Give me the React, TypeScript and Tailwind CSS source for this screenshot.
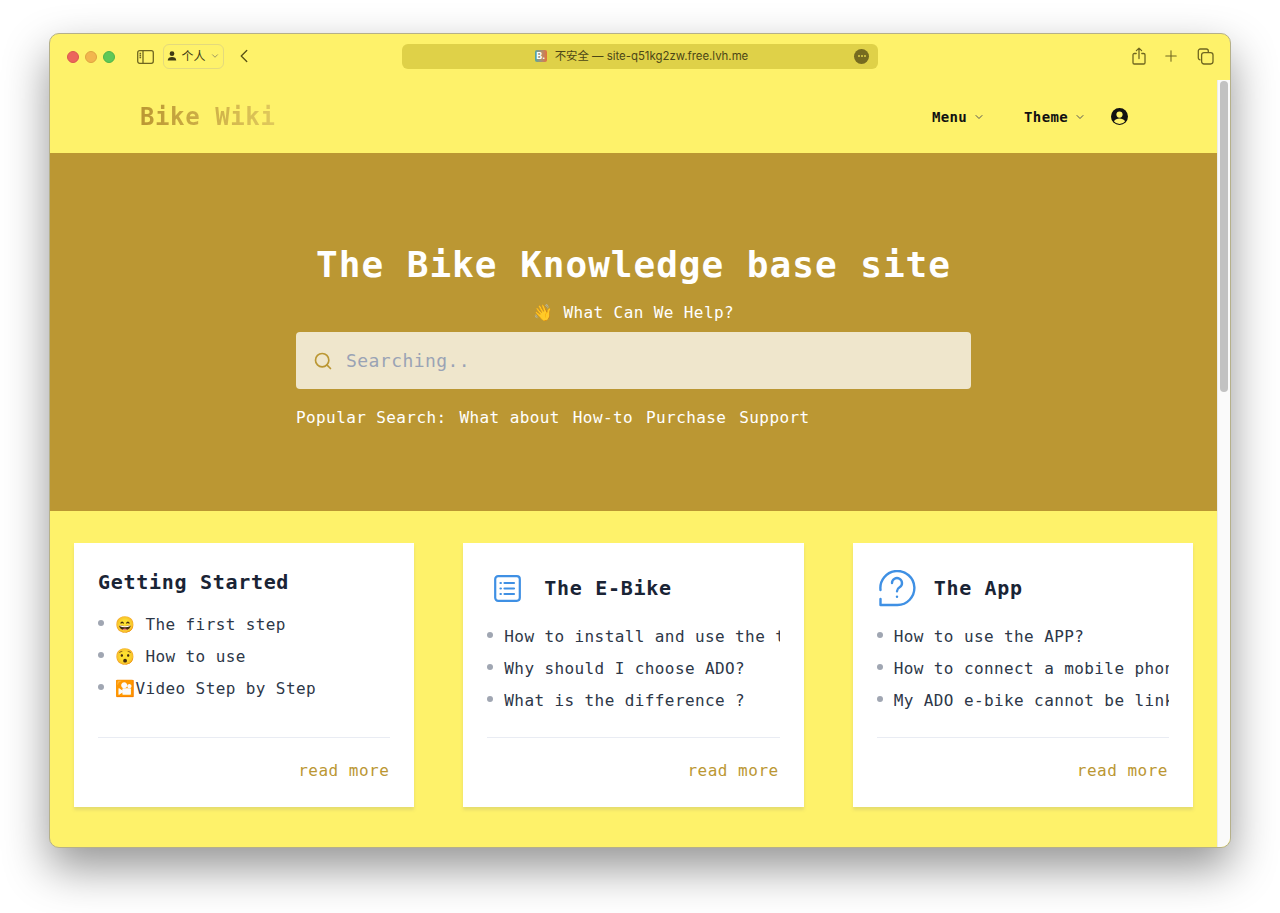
import React from 'react';
import { ChevronDown, ChevronLeft, Search, Plus } from 'lucide-react';

const mono = "font-['DejaVu_Sans_Mono','Liberation_Mono',monospace]";

const ShareIcon = () => (
  <svg width="14" height="18" viewBox="0 0 14 18" fill="none" stroke="#6f6620" strokeWidth="1.3" strokeLinecap="round" strokeLinejoin="round">
    <path d="M4.200 6.500H2.300A1.300 1.300 0 0 0 1 7.800v7.900A1.300 1.300 0 0 0 2.300 17h9.400A1.300 1.300 0 0 0 13 15.700V7.800a1.300 1.300 0 0 0-1.300-1.300H9.800" />
    <path d="M7 11.500V1.200M4.400 3.600 7 1.100l2.600 2.500" />
  </svg>
);

const TabsIcon = () => (
  <svg width="17" height="17" viewBox="0 0 17 17" fill="none" stroke="#6f6620" strokeWidth="1.3">
    <path d="M3.500 11.800h-.2a2 2 0 0 1-2-2V3a2 2 0 0 1 2-2h6a2 2 0 0 1 2 2v1.200" />
    <rect x="4.600" y="4.600" width="11.400" height="11.400" rx="2.400" />
  </svg>
);

const SidebarIcon = () => (
  <svg width="17" height="14" viewBox="0 0 17 14" fill="none" stroke="#6f6620" strokeWidth="1.3">
    <rect x="0.700" y="0.700" width="15.600" height="12.600" rx="2" />
    <path d="M6 0.700v12.600" />
    <path d="M2.500 3.500h1.600M2.500 5.500h1.600M2.500 7.500h1.600" />
  </svg>
);

const UserCircle = () => (
  <svg width="17" height="17" viewBox="0 0 17 17">
    <circle cx="8.500" cy="8.500" r="8.500" fill="#111" />
    <circle cx="8.500" cy="6.600" r="3.100" fill="#fef26a" />
    <path d="M2.900 13.200c1.200-1.800 3.200-2.600 5.600-2.600s4.400.8 5.600 2.600a7 7 0 0 1-11.200 0z" fill="#fef26a" />
  </svg>
);

const ListIcon = () => (
  <svg width="27" height="27" viewBox="0 0 27 27" fill="none" stroke="#3f90e4" strokeWidth="2.200" strokeLinecap="round">
    <rect x="1.200" y="1.200" width="24.600" height="24.600" rx="3" />
    <path d="M10.500 8h9.500M10.500 13.500h9.500M10.500 19h9.500" />
    <path d="M6.500 8h.4M6.500 13.500h.4M6.500 19h.4" />
  </svg>
);

const QuestionIcon = () => (
  <svg width="38" height="37" viewBox="0 0 38 37" fill="none" stroke="#3f90e4" strokeWidth="2.400" strokeLinecap="round" strokeLinejoin="round">
    <path d="M2.500 20a17 17 0 1 1 17 15H2.500v-6" />
    <path d="M14 13a5 5 0 1 1 7.600 4.300c-1.800 1.100-2.600 2.100-2.600 3.900" />
    <path d="M19 26.600v.2" />
  </svg>
);

const Bullet: React.FC<{ children: React.ReactNode }> = ({ children }) => (
  <li className="flex items-start h-6 mb-2 overflow-hidden whitespace-nowrap">
    <span className="w-[6px] h-[6px] rounded-full bg-[#a0a6b2] mt-[7px] mr-[11px] shrink-0" />
    <span>{children}</span>
  </li>
);

const CardFooter = () => (
  <div className="mt-auto">
    <div className="border-t border-[#e9ecf3]" />
    <div className="text-right pt-[21px] pr-[1px] leading-6 tracking-[0.5px] text-[#bb9733]">read more</div>
  </div>
);

const InfoCard: React.FC<{ title: string; icon?: React.ReactNode; iconPad?: string; items: string[] }> = ({ title, icon, iconPad, items }) => (
  <div className="bg-white h-[264px] px-6 pt-[25px] pb-6 flex flex-col shadow-[0_3px_3px_rgba(120,130,120,0.18)] text-[#2d3748] tracking-wide">
    {icon ? (
      <div className="flex items-center h-10 mb-[17px]">
        <div className={`w-[57px] shrink-0 flex items-center ${iconPad}`}>{icon}</div>
        <h2 className="text-xl font-semibold tracking-[0.7px] text-[#1a2435]">{title}</h2>
      </div>
    ) : (
      <h2 className="text-xl font-semibold tracking-[0.7px] text-[#1a2435] leading-7 mb-[17px]">{title}</h2>
    )}
    <ul>
      {items.map(item => <Bullet key={item}>{item}</Bullet>)}
    </ul>
    <CardFooter />
  </div>
);

export default function App() {
  return (
    <div className="min-h-[913px] bg-white pt-[33px] pl-[49px] overflow-hidden">
      <div className="w-[1182px] h-[815px] rounded-[10px] overflow-hidden bg-[#fef26a] border border-[#b5b08a] shadow-[0_20px_45px_rgba(0,0,0,0.42)] flex flex-col">
        {/* safari toolbar */}
        <div className="h-[46px] shrink-0 flex items-center pl-[17px] pr-[16px] font-['Inter',sans-serif]">
          <div className="flex items-center gap-[6px]">
            <span className="w-3 h-3 rounded-full bg-[#ec655c] border border-[#d9574f]" />
            <span className="w-3 h-3 rounded-full bg-[#f2b54e] border border-[#dfa440]" />
            <span className="w-3 h-3 rounded-full bg-[#5fc857] border border-[#50b449]" />
          </div>
          <div className="ml-[22px] mb-[1px]"><SidebarIcon /></div>
          <div className="ml-[9px] mb-[2px] w-[61px] h-[25px] rounded-[6px] border border-[#e4da7c] flex items-center justify-center gap-[4px] text-[12px] text-[#3f3a14] font-['Noto_Sans_CJK_SC',sans-serif]">
            <svg width="10" height="10" viewBox="0 0 11 11" fill="#3f3a14"><circle cx="5.500" cy="3" r="2.600" /><path d="M0.800 10.500c0-2.800 2-4 4.700-4s4.700 1.200 4.700 4z" /></svg>
            <span>个人</span>
            <ChevronDown size={10} className="text-[#8a8660]" />
          </div>
          <ChevronLeft size={22} strokeWidth={1.5} className="ml-[9px] mb-[2px] text-[#5d5518]" />
          <div className="ml-[147px] mb-[2px] w-[476px] h-[25px] rounded-[6px] bg-[#dfd148] flex items-center justify-center pl-[3px] relative text-[11.4px] text-[#4c4616]">
            <span className="w-3 h-3 rounded-[2px] mr-2 bg-gradient-to-r from-[#4aa5a0] to-[#e2703a] flex items-center justify-center text-[9px] leading-3 font-bold text-white">B.</span>
            <span className="pt-[2px] font-['Inter','Noto_Sans_CJK_SC',sans-serif]">不安全 — site-q51kg2zw.free.lvh.me</span>
            <span className="absolute right-[9px] top-[5px] w-[15px] h-[15px] rounded-full bg-[#766b20] flex items-center justify-center gap-[1px]">
              <i className="w-[2px] h-[2px] rounded-full bg-[#dfd148]" />
              <i className="w-[2px] h-[2px] rounded-full bg-[#dfd148]" />
              <i className="w-[2px] h-[2px] rounded-full bg-[#dfd148]" />
            </span>
          </div>
          <div className="ml-auto mb-[2px] flex items-center">
            <ShareIcon />
            <Plus size={18} strokeWidth={1.4} className="ml-[16px] text-[#6f6620]" />
            <span className="ml-[17px]"><TabsIcon /></span>
          </div>
        </div>

        <div className="flex flex-1 min-h-0">
          <div className={`w-[1167px] ${mono}`}>
            {/* nav */}
            <nav className="h-[73px] flex items-center justify-between pl-[90px] pr-[89px]">
              <div className="text-2xl font-bold tracking-wide bg-gradient-to-r from-[#bb9733] to-[#e0c95c] bg-clip-text text-transparent">Bike Wiki</div>
              <div className="flex items-center text-sm font-semibold tracking-wide text-[#111]">
                <span>Menu</span>
                <ChevronDown size={12} className="ml-[6px] text-[#555]" />
                <span className="ml-[39px]">Theme</span>
                <ChevronDown size={12} className="ml-[6px] text-[#555]" />
                <span className="ml-[25px]"><UserCircle /></span>
              </div>
            </nav>

            {/* hero */}
            <section className="h-[358px] bg-[#bb9733] text-white flex flex-col items-center pt-[89px] tracking-wide">
              <h1 className="text-4xl font-bold leading-[46px] tracking-[1px]">The Bike Knowledge base site</h1>
              <p className="mt-[13px] leading-6">👋 What Can We Help?</p>
              <div className="w-[675px] mt-[7px]">
                <div className="h-[57px] bg-[#efe6cc] rounded flex items-center pl-[17px] pr-[18px]">
                  <Search size={20} strokeWidth={2} className="text-[#bb9733] shrink-0" />
                  <input
                    placeholder="Searching.."
                    className="ml-[13px] flex-1 bg-transparent outline-none text-lg tracking-wide placeholder:text-[#9aa3b5]"
                  />
                </div>
                <div className="mt-[17px] leading-6 flex gap-[13px]">
                  <span>Popular Search:</span>
                  <span>What about</span>
                  <span>How-to</span>
                  <span>Purchase</span>
                  <span>Support</span>
                </div>
              </div>
            </section>

            {/* cards */}
            <section className="grid grid-cols-3 gap-[49px] px-6 pt-8">
              <InfoCard title="Getting Started" items={['😄 The first step', '😯 How to use', '🎦Video Step by Step']} />
              <InfoCard title="The E-Bike" icon={<ListIcon />} iconPad="pl-[7px]" items={['How to install and use the tool', 'Why should I choose ADO?', 'What is the difference ?']} />
              <InfoCard title="The App" icon={<QuestionIcon />} iconPad="pl-[1px]" items={['How to use the APP?', 'How to connect a mobile phone', 'My ADO e-bike cannot be linked']} />
            </section>
          </div>

          {/* scrollbar */}
          <div className="flex-1 bg-[#fafafa] border-l border-[#ececec] px-[2px] pt-[1px]">
            <div className="h-[311px] rounded-full bg-[#c2c2c2]" />
          </div>
        </div>
      </div>
    </div>
  );
}
